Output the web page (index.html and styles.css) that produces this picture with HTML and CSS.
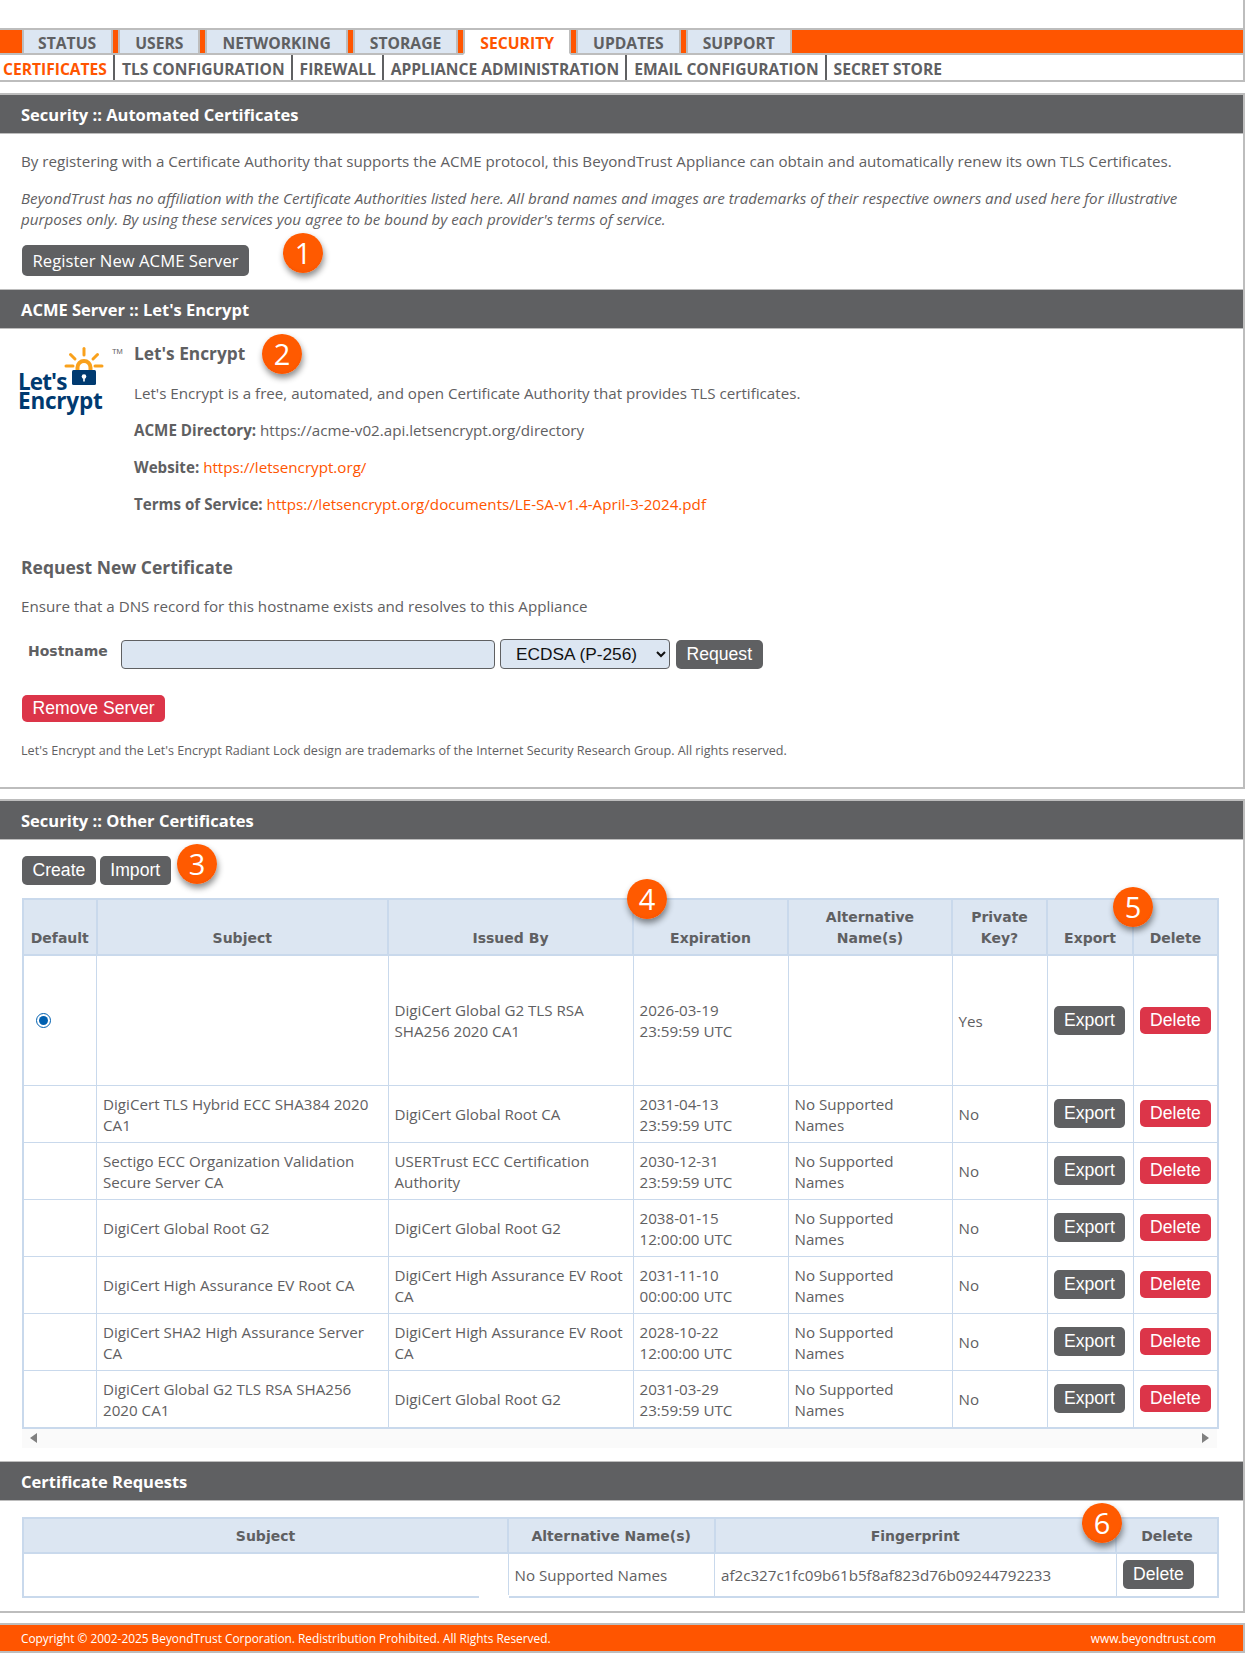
FILE: index.html
```html
<!DOCTYPE html>
<html lang="en">
<head>
<meta charset="utf-8">
<title>Security :: Certificates</title>
<link rel="stylesheet" href="styles.css">
</head>
<body>
<div class="page">
  <nav class="nav">
    <ul class="tabs">
      <li class="tab">STATUS</li>
      <li class="tab">USERS</li>
      <li class="tab">NETWORKING</li>
      <li class="tab">STORAGE</li>
      <li class="tab tab-active">SECURITY</li>
      <li class="tab">UPDATES</li>
      <li class="tab">SUPPORT</li>
    </ul>
    <ul class="subnav">
      <li class="sub sub-active">CERTIFICATES</li>
      <li class="sub">TLS CONFIGURATION</li>
      <li class="sub">FIREWALL</li>
      <li class="sub">APPLIANCE ADMINISTRATION</li>
      <li class="sub">EMAIL CONFIGURATION</li>
      <li class="sub sub-last">SECRET STORE</li>
    </ul>
  </nav>

  <section class="box">
    <h2 class="bar">Security :: Automated Certificates</h2>
    <p class="intro">By registering with a Certificate Authority that supports the ACME protocol, this BeyondTrust Appliance can obtain and automatically renew its own TLS Certificates.</p>
    <p class="note">BeyondTrust has no affiliation with the Certificate Authorities listed here. All brand names and images are trademarks of their respective owners and used here for illustrative purposes only. By using these services you agree to be bound by each provider's terms of service.</p>
    <button class="btn btn-open btn-register">Register New ACME Server</button>

    <h2 class="bar bar-ruled">ACME Server :: Let's Encrypt</h2>
    <div class="acme">
      <svg class="logo" viewBox="0 0 134 75" width="134" height="75" role="img" aria-label="Let's Encrypt">
        <g stroke="#f9a11c" stroke-width="3" stroke-linecap="round" fill="none">
          <path d="M84 3.500V10"/>
          <path d="M70.500 9.500L75 14"/>
          <path d="M97.500 9.500L93 14"/>
          <path d="M66 21H73"/>
          <path d="M95 21H102"/>
          <path d="M77.500 26V22.500a6.500 6.500 0 0 1 13 0V26" stroke-width="4" stroke-linecap="butt"/>
        </g>
        <rect x="72" y="25" width="24" height="15" rx="1.500" fill="#003a70"/>
        <circle cx="84" cy="31.500" r="2.300" fill="#fff"/>
        <rect x="83.200" y="32" width="1.600" height="4.500" fill="#fff"/>
        <text class="logo-text logo-lets" x="18" y="44.500">Let's</text>
        <text class="logo-text" x="18" y="64">Encrypt</text>
        <text class="logo-tm" x="112" y="8.500">TM</text>
      </svg>
      <div class="acme-info">
        <h3 class="acme-name">Let's Encrypt</h3>
        <p class="acme-line">Let's Encrypt is a free, automated, and open Certificate Authority that provides TLS certificates.</p>
        <p class="acme-line"><b>ACME Directory:</b> https://acme-v02.api.letsencrypt.org/directory</p>
        <p class="acme-line"><b>Website:</b> <a class="link" href="#">https://letsencrypt.org/</a></p>
        <p class="acme-line"><b>Terms of Service:</b> <a class="link" href="#">https://letsencrypt.org/documents/LE-SA-v1.4-April-3-2024.pdf</a></p>
      </div>
    </div>
    <h3 class="req-title">Request New Certificate</h3>
    <p class="req-hint">Ensure that a DNS record for this hostname exists and resolves to this Appliance</p>
    <form class="req-form">
      <label class="req-label" for="hostname">Hostname</label>
      <input class="req-input" id="hostname" type="text">
      <select class="req-select"><option>ECDSA (P-256)</option></select>
      <button class="btn" type="button">Request</button>
    </form>
    <button class="btn btn-red btn-remove">Remove Server</button>
    <p class="fine">Let's Encrypt and the Let's Encrypt Radiant Lock design are trademarks of the Internet Security Research Group. All rights reserved.</p>
  </section>

  <section class="box box-next">
    <h2 class="bar">Security :: Other Certificates</h2>
    <div class="actions">
      <button class="btn">Create</button>
      <button class="btn">Import</button>
    </div>
    <table class="grid grid-certs">
      <colgroup>
        <col class="c1"><col class="c2"><col class="c3"><col class="c4"><col class="c5"><col class="c6"><col class="c7"><col class="c8">
      </colgroup>
      <thead>
        <tr><th>Default</th><th>Subject</th><th>Issued By</th><th>Expiration</th><th>Alternative<br>Name(s)</th><th>Private<br>Key?</th><th>Export</th><th>Delete</th></tr>
      </thead>
      <tbody>
        <tr class="row-first">
          <td class="act"><input class="radio" type="radio" name="def" checked></td><td></td><td>DigiCert Global G2 TLS RSA SHA256 2020 CA1</td><td>2026-03-19<br>23:59:59 UTC</td><td></td><td>Yes</td>
          <td class="act"><button class="btn">Export</button></td><td class="act"><button class="btn btn-red">Delete</button></td>
        </tr>
        <tr>
          <td></td><td>DigiCert TLS Hybrid ECC SHA384 2020 CA1</td><td>DigiCert Global Root CA</td><td>2031-04-13<br>23:59:59 UTC</td><td>No Supported<br>Names</td><td>No</td>
          <td class="act"><button class="btn">Export</button></td><td class="act"><button class="btn btn-red">Delete</button></td>
        </tr>
        <tr>
          <td></td><td>Sectigo ECC Organization Validation Secure Server CA</td><td>USERTrust ECC Certification Authority</td><td>2030-12-31<br>23:59:59 UTC</td><td>No Supported<br>Names</td><td>No</td>
          <td class="act"><button class="btn">Export</button></td><td class="act"><button class="btn btn-red">Delete</button></td>
        </tr>
        <tr>
          <td></td><td>DigiCert Global Root G2</td><td>DigiCert Global Root G2</td><td>2038-01-15<br>12:00:00 UTC</td><td>No Supported<br>Names</td><td>No</td>
          <td class="act"><button class="btn">Export</button></td><td class="act"><button class="btn btn-red">Delete</button></td>
        </tr>
        <tr>
          <td></td><td>DigiCert High Assurance EV Root CA</td><td>DigiCert High Assurance EV Root CA</td><td>2031-11-10<br>00:00:00 UTC</td><td>No Supported<br>Names</td><td>No</td>
          <td class="act"><button class="btn">Export</button></td><td class="act"><button class="btn btn-red">Delete</button></td>
        </tr>
        <tr>
          <td></td><td>DigiCert SHA2 High Assurance Server CA</td><td>DigiCert High Assurance EV Root CA</td><td>2028-10-22<br>12:00:00 UTC</td><td>No Supported<br>Names</td><td>No</td>
          <td class="act"><button class="btn">Export</button></td><td class="act"><button class="btn btn-red">Delete</button></td>
        </tr>
        <tr>
          <td></td><td>DigiCert Global G2 TLS RSA SHA256 2020 CA1</td><td>DigiCert Global Root G2</td><td>2031-03-29<br>23:59:59 UTC</td><td>No Supported<br>Names</td><td>No</td>
          <td class="act"><button class="btn">Export</button></td><td class="act"><button class="btn btn-red">Delete</button></td>
        </tr>
      </tbody>
    </table>
    <div class="hscroll"><span class="arrow arrow-l"></span><span class="arrow arrow-r"></span></div>

    <h2 class="bar bar-ruled">Certificate Requests</h2>
    <table class="grid grid-reqs">
      <colgroup>
        <col class="r1"><col class="r2"><col class="r3"><col class="r4">
      </colgroup>
      <thead>
        <tr><th>Subject</th><th>Alternative Name(s)</th><th>Fingerprint</th><th>Delete</th></tr>
      </thead>
      <tbody>
        <tr>
          <td class="cell-gap"></td><td>No Supported Names</td><td>af2c327c1fc09b61b5f8af823d76b09244792233</td><td class="act cell-left"><button class="btn">Delete</button></td>
        </tr>
      </tbody>
    </table>
  </section>

  <footer class="foot">
    <span>Copyright © 2002-2025 BeyondTrust Corporation. Redistribution Prohibited. All Rights Reserved.</span>
    <span>www.beyondtrust.com</span>
  </footer>

  <span class="badge b1">1</span>
  <span class="badge b2">2</span>
  <span class="badge b3">3</span>
  <span class="badge b4">4</span>
  <span class="badge b5">5</span>
  <span class="badge b6">6</span>
</div>
<div class="under"></div>
<div class="photo"></div>
</body>
</html>
```

FILE: styles.css
```css
* { box-sizing: border-box; }
html, body { margin: 0; padding: 0; background: #fff; }
body {
  font-family: "Open Sans", "Noto Sans", sans-serif;
  font-size: 15.160px;
  line-height: 21px;
  color: #5f6062;
  overflow-x: hidden;
}
p, h2, h3, ul { margin: 0; padding: 0; }
ul { list-style: none; }
.page { position: relative; width: 1245px; }

/* nav */
.nav { padding-top: 28px; border-right: 2px solid #bdbdbd; height: 82px; }
.tabs {
  display: flex; gap: 5px; height: 27px; padding-left: 22px;
  background: #ff5500;
  border-top: 2px solid #bdbdbd; border-bottom: 2px solid #bdbdbd;
}
.tab {
  height: 25px; padding: 2px 15px 0 15px; margin-bottom: -2px;
  background: #dce6f2;
  border: solid #bdbdbd; border-width: 0 2px 2px;
  font-weight: 700; font-size: 15.700px; line-height: 23px;
  white-space: nowrap;
}
.tab:first-child { padding-left: 14px; }
.tab-active { background: #fff; color: #ff5500; border-bottom-color: #fff; }
.subnav {
  display: flex; height: 27px; padding-left: 3px;
  border-bottom: 2px solid #bdbdbd;
}
.sub {
  padding: 0 6px 0 7px; border-right: 2px solid #5f6062;
  font-weight: 700; font-size: 15.600px; line-height: 28px; white-space: nowrap;
}
.sub-active { color: #ff5500; padding-left: 0; }
.sub-last { border-right: 0; }

/* boxes */
.box {
  margin-top: 11px;
  border: solid #bdbdbd; border-width: 2px 2px 2px 0;
}
.box-next { margin-top: 10px; padding-bottom: 13px; }
.bar {
  height: 39px; padding-left: 21px;
  background: #5f6062; color: #fff;
  border-bottom: 1px solid #bdbdbd;
  font-size: 16.500px; font-weight: 700; line-height: 40px;
}
.bar-ruled { height: 40px; border-top: 1px solid #bdbdbd; }
.intro { padding: 17px 21px 0; }
.note { padding: 16px 21px 0; font-style: italic; }
.btn-register { margin: 15px 0 13px 22px; display: block; }

.btn {
  height: 29px; padding: 0 10.500px;
  border: 0; border-radius: 5px;
  background: #5f6062; color: #fff;
  font-family: "Liberation Sans", Arial, sans-serif;
  font-size: 17.600px; line-height: 29px;
  white-space: nowrap;
}
.btn-open { font-family: "Open Sans", sans-serif; font-size: 16.700px; height: 31px; }
.btn-red { height: 27px; background: #dc3549; line-height: 27px; }

/* acme */
.acme { display: flex; height: 190px; }
.logo { display: block; margin-top: 16px; flex: none; }
.acme-info { padding-top: 11px; }
.acme-name { font-size: 17.300px; line-height: 28px; font-weight: 700; }
.acme-line { margin-top: 16px; }
.acme-name + .acme-line { margin-top: 15px; }
.link { color: #ff5500; text-decoration: none; }
.req-title { margin: 34px 21px 0; font-size: 17.500px; line-height: 28px; font-weight: 700; }
.req-hint { margin: 15px 21px 0; }
.req-form { display: flex; align-items: flex-start; margin: 23px 0 0 28px; }
.req-label {
  width: 93px; padding-top: 1px;
  font-family: "DejaVu Sans", Verdana, sans-serif;
  font-size: 14px; font-weight: 700; line-height: 21px;
}
.req-input {
  width: 374px; height: 29px; margin-right: 5px;
  background: #dce6f2; border: 1px solid #5f6062; border-radius: 4px;
}
.req-select {
  width: 170px; height: 30px; margin: -1px 6px 0 0; padding-left: 11px;
  background: #dce6f2; border: 1px solid #5f6062; border-radius: 4px;
  font-family: "Liberation Sans", Arial, sans-serif; font-size: 17.300px; color: #111;
}
.btn-remove { display: block; margin: 26px 0 0 22px; }
.fine { margin: 18px 21px 0; padding-bottom: 26px; font-size: 12.600px; }

/* tables */
.actions { display: flex; gap: 4px; padding: 16px 0 0 22px; }
.grid {
  border-collapse: collapse; table-layout: fixed;
  margin-left: 22px; width: 1195px;
  border: 2px solid #c9d9ec;
}
.grid-certs { margin-top: 13px; }
.grid-reqs { margin-top: 16px; }
.c1 { width: 73.500px; } .c2 { width: 291.500px; } .c3 { width: 245px; } .c4 { width: 155px; }
.c5 { width: 164px; } .c6 { width: 95px; } .c7 { width: 86px; } .c8 { width: 85px; }
.r1 { width: 485px; } .r2 { width: 206.500px; } .r3 { width: 401.500px; } .r4 { width: 102px; }
.grid th {
  padding: 7px 6px 5px; vertical-align: bottom; text-align: center;
  background: #dce6f2; border: 2px solid #c9d9ec;
  font-family: "DejaVu Sans", Verdana, sans-serif;
  font-size: 14px; font-weight: 700; line-height: 21px;
}
.grid td { padding: 8px 6px 6px; border: 1px solid #c9d9ec; height: 55.500px; }
.grid td.act { padding: 6px; }
.grid .row-first td { height: 130px; }
.grid-reqs td { height: 44px; }
.radio { width: 15px; height: 15px; margin: 0 0 0 6px; accent-color: #0060b0; display: block; }
.cell-left { text-align: left; }
.cell-gap { position: relative; }
.cell-gap::after {
  content: ""; position: absolute; right: -1px; bottom: -2px;
  width: 30px; height: 3px; background: #fff;
}
.hscroll {
  display: flex; justify-content: space-between; align-items: center;
  margin-left: 22px; width: 1195px; height: 19px; padding: 0 8px;
  background: #fafafa;
}
.arrow { width: 0; height: 0; border: solid transparent; border-width: 5px 0; }
.arrow-l { border-width: 5px 7px 5px 0; border-right-color: #808080; }
.arrow-r { border-width: 5px 0 5px 7px; border-left-color: #808080; }
.hscroll + .bar { margin-top: 13px; }

/* footer */
.foot {
  display: flex; justify-content: space-between;
  margin-top: 10px; height: 30px; padding: 0 27px 0 21px;
  background: #ff5500; color: #fff;
  border: solid #bdbdbd; border-width: 2px 2px 2px 0;
  font-size: 11.850px; line-height: 26px;
}
.under { height: 2px; margin-top: 10px; background: #e0e0e0; }
.photo {
  height: 5px; margin-top: 3px;
  background: linear-gradient(90deg,
    #4d6d5e 0, #8aa597 6%, #58776a 12%, #a7b3a0 19%, #3d5a5a 24%, #1e1e1e 27%, #b39a4a 30%, #1c1c1c 33%,
    #15705f 38%, #2c9183 48%, #468d80 58%, #7d8a7a 64%, #1a1a1a 70%, #bb8a20 72%, #2a2a2a 78%, #5c7060 86%, #1e2a30 94%, #39574f 100%);
}

/* numbered callouts */
.badge {
  position: absolute; width: 40px; height: 40px; border-radius: 50%;
  background: radial-gradient(circle at 50% 45%, #ff5a00 60%, #f04c00 100%);
  color: #fff; text-align: center;
  font-family: "Open Sans", sans-serif; font-size: 29px; line-height: 39px;
  box-shadow: 1px 4px 6px rgba(0,0,0,.45);
}
.b1 { left: 283px; top: 233px; }
.b2 { left: 262px; top: 334px; }
.b3 { left: 177px; top: 844px; }
.b4 { left: 627px; top: 879px; }
.b5 { left: 1113px; top: 887px; }
.b6 { left: 1082px; top: 1503px; }

.logo-text { font-family: "Open Sans", sans-serif; font-weight: 700; font-size: 22.500px; letter-spacing: -.2px; fill: #003a70; }
.logo-lets { letter-spacing: -.9px; }
.logo-tm { font-family: "Liberation Sans", Arial, sans-serif; font-size: 7.500px; fill: #5f6062; }
```
